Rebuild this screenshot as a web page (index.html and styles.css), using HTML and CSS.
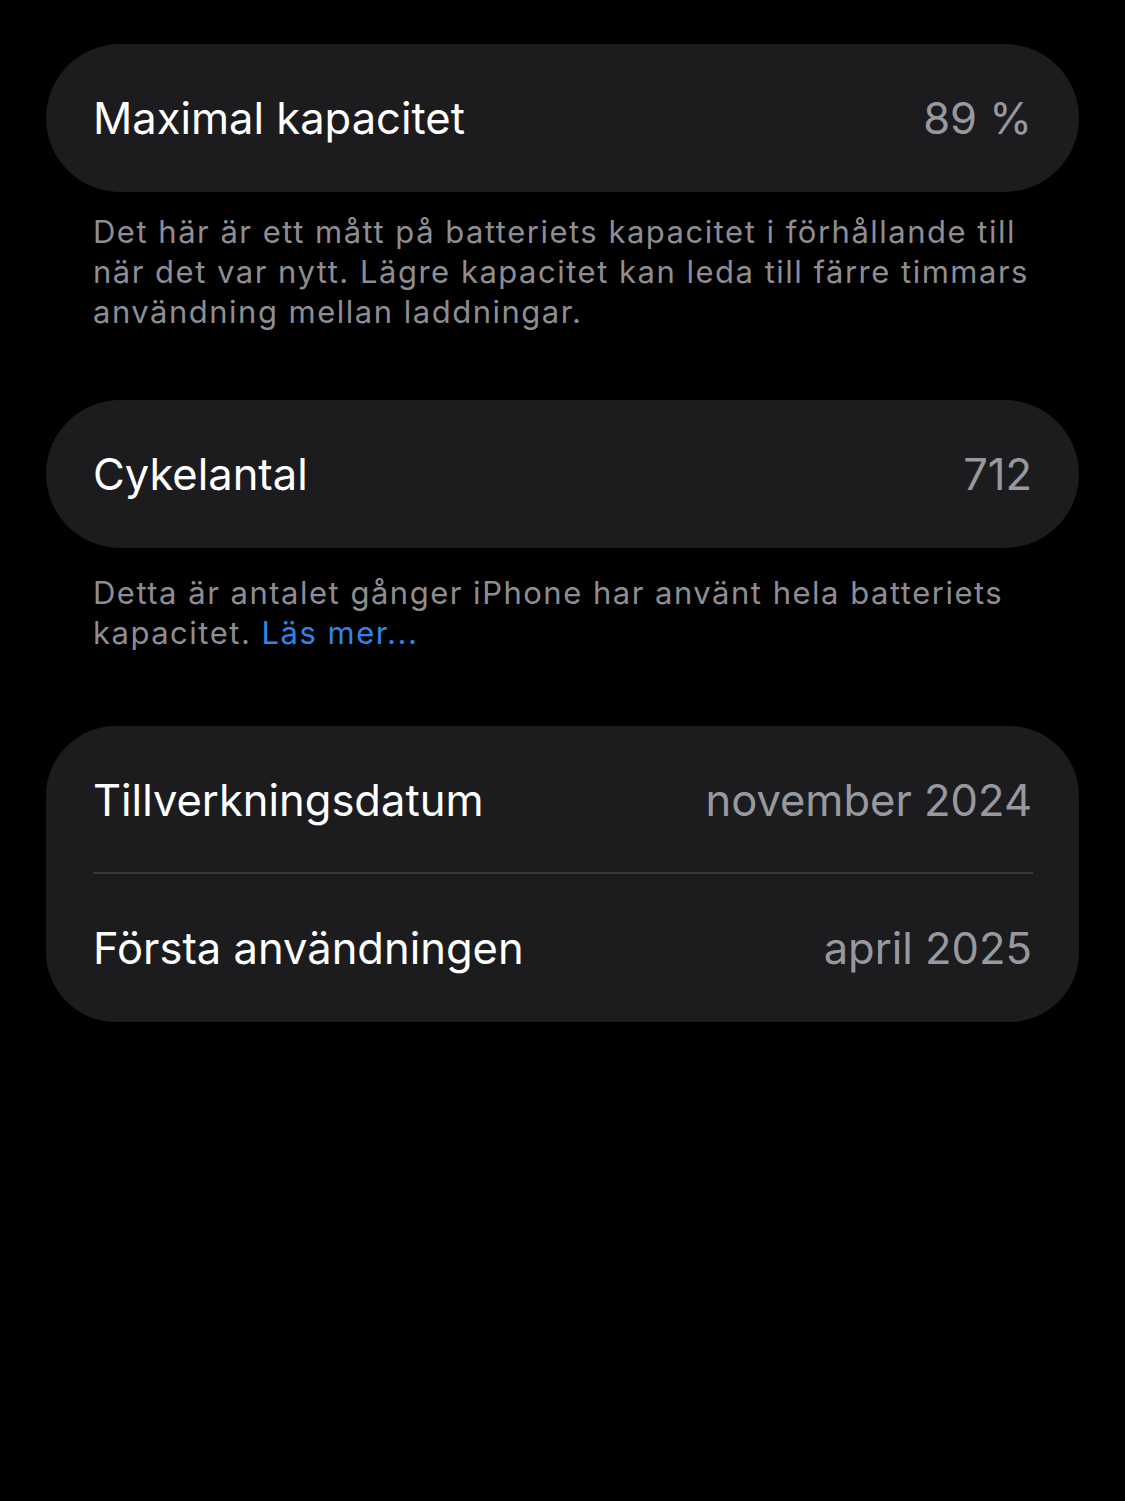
FILE: index.html
```html
<!DOCTYPE html>
<html lang="sv">
    <head>
        <title>Batteritillstånd</title>
        <meta charset="utf-8" />
        <meta name="viewport" content="width=device-width, initial-scale=1.0" />
        <link rel="stylesheet" href="styles.css">
    </head>
    <body>
        <div id="main">
            <div class="group pill">
                <div class="row">
                    <span class="label">Maximal kapacitet</span>
                    <span class="value">89 %</span>
                </div>
            </div>
            <p class="footer first">Det här är ett mått på batteriets kapacitet i förhållande till när det var nytt. Lägre kapacitet kan leda till färre timmars användning mellan laddningar.</p>

            <div class="group pill">
                <div class="row">
                    <span class="label">Cykelantal</span>
                    <span class="value">712</span>
                </div>
            </div>
            <p class="footer second">Detta är antalet gånger iPhone har använt hela batteriets kapacitet. <a href="#">Läs mer...</a></p>

            <div class="group">
                <div class="row">
                    <span class="label">Tillverkningsdatum</span>
                    <span class="value">november 2024</span>
                </div>
                <div class="divider"></div>
                <div class="row">
                    <span class="label">Första användningen</span>
                    <span class="value">april 2025</span>
                </div>
            </div>
        </div>
    </body>
</html>
```

FILE: styles.css
```css
html, body {
    margin: 0px;
    padding: 0px;
    background: #000000;
    font-family: Inter, "Noto Sans", sans-serif;
}
#main {
    display: flex;
    flex-direction: column;
    padding: 44px 46px 0px;
}
.group {
    background: #1c1c1e;
    border-radius: 70px;
    overflow: hidden;
}
.pill {
    border-radius: 74px;
}
.row {
    display: flex;
    align-items: center;
    justify-content: space-between;
    padding: 0px 47px 0px 47px;
    height: 148px;
}
.label {
    color: #ffffff;
    font-size: 43.5px;
}
.value {
    color: #98989f;
    font-size: 43.5px;
}
.divider {
    margin: -2px 46px 0px 47px;
    height: 2px;
    background: #38383a;
}
.footer {
    margin: 20px 0px 68px;
    padding: 0px 38px 0px 47px;
    color: #8d8d93;
    font-size: 31px;
    letter-spacing: 1.5px;
    line-height: 40px;
}
.footer.second {
    margin: 25px 0px 73px;
}
.footer a {
    color: #2f86ea;
    text-decoration: none;
}
```
